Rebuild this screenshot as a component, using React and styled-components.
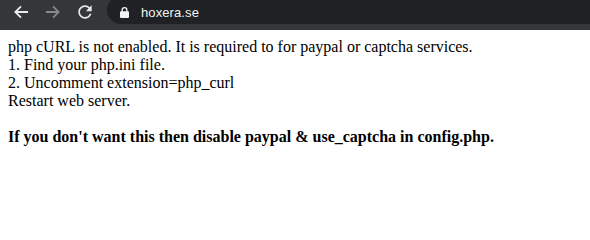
import React from 'react';
import styled, { createGlobalStyle } from 'styled-components';

const GlobalStyle = createGlobalStyle`
  html, body {
    margin: 0;
    padding: 0;
    background: #fff;
  }
`;

const Toolbar = styled.div`
  display: flex;
  align-items: flex-start;
  height: 30px;
  background: #35363a;
  overflow: hidden;
`;

const NavButton = styled.div`
  display: flex;
  align-items: center;
  justify-content: center;
  width: 32px;
  height: 24px;
  margin-left: ${props => (props.first ? '5px' : '0')};

  svg {
    display: block;
  }
`;

const Omnibox = styled.div`
  flex: 1;
  display: flex;
  align-items: center;
  height: 28px;
  margin-top: -4px;
  margin-left: 6px;
  padding: 4px 0 0 13px;
  box-sizing: border-box;
  background: #202124;
  border-radius: 14px 0 0 14px;
`;

const Url = styled.span`
  margin-left: 12px;
  font-family: 'Liberation Sans', Arial, sans-serif;
  font-size: 13px;
  color: #f1f3f4;
  letter-spacing: 0.1px;
`;

const Page = styled.div`
  margin: 8px;
  font-family: 'Liberation Serif', 'Times New Roman', serif;
  font-size: 16px;
  color: #000;
`;

const Line = styled.div`
  line-height: normal;
`;

const Notice = styled.div`
  margin-top: 18px;
  font-weight: bold;
`;

const BackIcon = ({ color }) => (
  <svg width="16" height="16" viewBox="0 0 16 16" fill="none">
    <path d="M15 8H2.5M8 2.3L2.3 8L8 13.7" stroke={color} strokeWidth="1.8" />
  </svg>
);

const ForwardIcon = ({ color }) => (
  <svg width="16" height="16" viewBox="0 0 16 16" fill="none">
    <path d="M1 8h12.5M8 2.3L13.7 8L8 13.7" stroke={color} strokeWidth="1.8" />
  </svg>
);

const ReloadIcon = ({ color }) => (
  <svg width="20" height="20" viewBox="0 0 24 24">
    <path
      fill={color}
      d="M17.65 6.35C16.2 4.9 14.21 4 12 4c-4.42 0-7.99 3.58-7.99 8s3.57 8 7.99 8c3.73 0 6.84-2.55 7.73-6h-2.08c-.82 2.33-3.04 4-5.65 4-3.31 0-6-2.69-6-6s2.69-6 6-6c1.66 0 3.14.69 4.22 1.78L13 11h7V4l-2.35 2.35z"
    />
  </svg>
);

const LockIcon = () => (
  <svg width="9" height="11" viewBox="0 0 9 11">
    <path
      fill="#f1f3f4"
      d="M1.5 4.2V3a3 3 0 0 1 6 0v1.2H8a1 1 0 0 1 1 1V10a1 1 0 0 1-1 1H1a1 1 0 0 1-1-1V5.2a1 1 0 0 1 1-1zM2.8 4.2h3.4V3a1.7 1.7 0 0 0-3.4 0z"
    />
  </svg>
);

export default function App() {
  return (
    <>
      <GlobalStyle />
      <Toolbar>
        <NavButton first>
          <BackIcon color="#e8eaed" />
        </NavButton>
        <NavButton>
          <ForwardIcon color="#87888b" />
        </NavButton>
        <NavButton>
          <ReloadIcon color="#e8eaed" />
        </NavButton>
        <Omnibox>
          <LockIcon />
          <Url>hoxera.se</Url>
        </Omnibox>
      </Toolbar>
      <Page>
        <Line>php cURL is not enabled. It is required to for paypal or captcha services.</Line>
        <Line>1. Find your php.ini file.</Line>
        <Line>2. Uncomment extension=php_curl</Line>
        <Line>Restart web server.</Line>
        <Notice>If you don't want this then disable paypal &amp; use_captcha in config.php.</Notice>
      </Page>
    </>
  );
}
